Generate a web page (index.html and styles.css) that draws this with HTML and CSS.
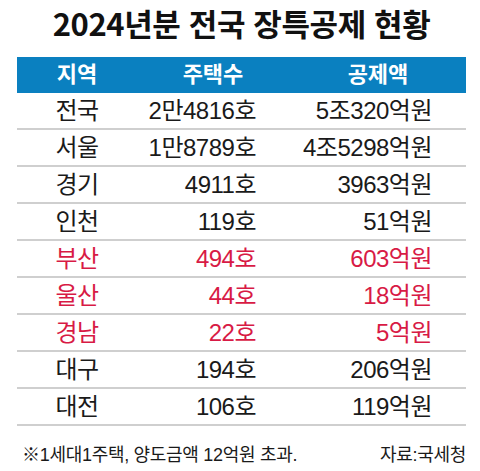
FILE: index.html
```html
<!DOCTYPE html>
<html lang="ko">
  <head>
    <meta charset="UTF-8" />
    <meta name="viewport" content="width=device-width, initial-scale=1.0" />
    <title>2024년분 전국 장특공제 현황</title>
    <link rel="stylesheet" href="styles.css">
  </head>
  <body>
    <div class="chart">
      <h1 class="title">2024년분 전국 장특공제 현황</h1>

      <div class="table">
        <div class="row head">
          <div class="cell region">지역</div>
          <div class="cell count">주택수</div>
          <div class="cell amount">공제액</div>
        </div>
        <div class="row">
          <div class="cell region">전국</div>
          <div class="cell count">2만4816호</div>
          <div class="cell amount">5조320억원</div>
        </div>
        <div class="row">
          <div class="cell region">서울</div>
          <div class="cell count">1만8789호</div>
          <div class="cell amount">4조5298억원</div>
        </div>
        <div class="row">
          <div class="cell region">경기</div>
          <div class="cell count">4911호</div>
          <div class="cell amount">3963억원</div>
        </div>
        <div class="row">
          <div class="cell region">인천</div>
          <div class="cell count">119호</div>
          <div class="cell amount">51억원</div>
        </div>
        <div class="row hot">
          <div class="cell region">부산</div>
          <div class="cell count">494호</div>
          <div class="cell amount">603억원</div>
        </div>
        <div class="row hot">
          <div class="cell region">울산</div>
          <div class="cell count">44호</div>
          <div class="cell amount">18억원</div>
        </div>
        <div class="row hot">
          <div class="cell region">경남</div>
          <div class="cell count">22호</div>
          <div class="cell amount">5억원</div>
        </div>
        <div class="row">
          <div class="cell region">대구</div>
          <div class="cell count">194호</div>
          <div class="cell amount">206억원</div>
        </div>
        <div class="row">
          <div class="cell region">대전</div>
          <div class="cell count">106호</div>
          <div class="cell amount">119억원</div>
        </div>
      </div>

      <div class="footer">
        <span class="note">※1세대1주택, 양도금액 12억원 초과.</span>
        <span class="source">자료:국세청</span>
      </div>
    </div>
  </body>
</html>
```

FILE: styles.css
```css
body {
  margin: 0;
  padding: 0;
  background-color: #ffffff;
  color: #1a1a1a;
  font-family: "Liberation Sans", "Noto Sans CJK KR", sans-serif;
}

.chart {
  width: 480px;
  padding: 0 14px 0 17px;
  box-sizing: border-box;
}

.title {
  margin: 0;
  height: 57px;
  font-family: "Noto Sans CJK KR", sans-serif;
  font-size: 31px;
  font-weight: 700;
  line-height: 46px;
  text-align: center;
  letter-spacing: -0.4px;
  color: #111111;
}

.table {
  width: 449px;
}

.row {
  display: grid;
  grid-template-columns: 120px 156px 173px;
  height: 35px;
  align-items: center;
  border-bottom: 2px solid #cfcfcf;
  font-size: 24px;
  letter-spacing: -0.5px;
}

.row.head {
  height: 36px;
  border-bottom: none;
  background-color: #0a80c0;
  color: #ffffff;
  font-size: 22px;
  font-weight: 700;
  letter-spacing: 0;
}

.row.hot {
  color: #d81a45;
}

.cell {
  line-height: 1;
  white-space: nowrap;
}

.region {
  text-align: center;
}

.count {
  padding-right: 37px;
  text-align: right;
}

.amount {
  padding-right: 34px;
  text-align: right;
}

.head .count {
  padding-left: 33px;
  text-align: center;
}

.head .amount {
  padding-left: 31px;
  text-align: center;
}

.footer {
  display: flex;
  justify-content: space-between;
  align-items: center;
  height: 54px;
  padding: 0 0 0 5px;
  font-size: 18px;
  letter-spacing: -0.3px;
  color: #1a1a1a;
}
```
